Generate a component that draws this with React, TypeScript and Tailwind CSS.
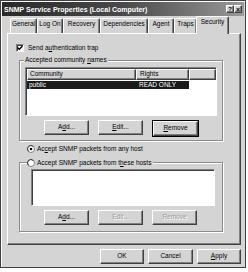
import React from 'react';

const raised =
  'border border-t-white border-l-white border-r-[#404040] border-b-[#404040] shadow-[inset_-1px_-1px_0_#808080]';
const sunken =
  'border border-t-[#808080] border-l-[#808080] border-r-white border-b-white shadow-[inset_1px_1px_0_#404040]';
const etched = 'border border-[#8c8c8c] shadow-[inset_1px_1px_0_#fff,1px_1px_0_#fff]';

type BtnProps = {
  children: React.ReactNode;
  disabled?: boolean;
  isDefault?: boolean;
  w?: string;
};

const Button: React.FC<BtnProps> = ({ children, disabled, isDefault, w = 'w-[45px]' }) => {
  const inner = (
    <div
      className={`${raised} ${w} h-[15px] flex items-center justify-center bg-[#d4d4d4] ${
        disabled ? 'text-[#9a9a9a] [text-shadow:1px_1px_0_#fff]' : 'text-black'
      }`}
    >
      {children}
    </div>
  );
  if (isDefault) {
    return <div className="border border-black">{inner}</div>;
  }
  return inner;
};

const Tab: React.FC<{ label: string; w: string; active?: boolean }> = ({ label, w, active }) => (
  <div
    className={`${w} flex justify-center border-t border-l border-r border-t-white border-l-white border-r-[#404040] rounded-t-[2px] shadow-[inset_-1px_0_0_#808080] bg-[#d4d4d4] ${
      active ? 'h-[18px] relative top-[1px] z-10 pt-[2px] -mx-[1px]' : 'h-[15px] pt-[2px]'
    }`}
  >
    {label}
  </div>
);

export default function App() {
  return (
    <div className="w-[248px] h-[272px] bg-white font-['Liberation_Sans',Arial,sans-serif] text-[6.5px] leading-none text-black">
      <div className="w-[246px] h-[268px] bg-[#d4d4d4] border border-[#404040] shadow-[inset_1px_1px_0_#fff] flex flex-col">
        {/* title bar */}
        <div className="mx-[1px] mt-[1px] h-[14px] flex items-center justify-between pl-[2px] pr-[2px] bg-gradient-to-r from-[#2a2a2a] via-[#4a4a4a] to-[#9a9a9a]">
          <span className="text-white font-bold text-[7px]">SNMP Service Properties (Local Computer)</span>
          <div className="flex">
            <div className={`${raised} w-[8px] h-[8px] flex items-center justify-center font-bold text-[6px] bg-[#d4d4d4]`}>?</div>
            <div className={`${raised} w-[8px] h-[8px] flex items-center justify-center font-bold text-[7px] bg-[#d4d4d4]`}>×</div>
          </div>
        </div>

        {/* tabs */}
        <div className="h-[17px] flex items-end pl-[9px]">
          <Tab label="General" w="w-[27px]" />
          <Tab label="Log On" w="w-[26px]" />
          <Tab label="Recovery" w="w-[37px]" />
          <Tab label="Dependencies" w="w-[48px]" />
          <Tab label="Agent" w="w-[26px]" />
          <Tab label="Traps" w="w-[23px]" />
          <Tab label="Security" w="w-[33px]" active />
        </div>

        {/* panel */}
        <div className="ml-[6px] w-[234px] h-[212px] border border-t-white border-l-white border-r-[#404040] border-b-[#404040] shadow-[inset_-1px_-1px_0_#808080] flex flex-col">
          <div className="ml-[8px] mt-[10px] flex items-center gap-[4px]">
            <div className={`${sunken} w-[8px] h-[8px] bg-white flex items-center justify-center`}>
              <svg width="6" height="6" viewBox="0 0 6 6">
                <path d="M0.5 2.5 L2.3 4.3 L5.5 1" stroke="#000" strokeWidth="1.3" fill="none" />
              </svg>
            </div>
            <span>
              Send a<span className="underline">u</span>thentication trap
            </span>
          </div>

          {/* group 1 */}
          <div className={`${etched} relative ml-[11px] mt-[8px] w-[204px] h-[81px] flex flex-col`}>
            <span className="absolute -top-[4px] left-[4px] px-[1px] bg-[#d4d4d4]">
              Accepted community <span className="underline">n</span>ames
            </span>
            <div className={`${sunken} ml-[5px] mt-[6px] w-[192px] h-[49px] bg-white flex flex-col`}>
              <div className="flex h-[11px] ml-[1px] mt-[1px]">
                <div className={`${raised} w-[109px] h-[11px] flex items-center pl-[2px] bg-[#d4d4d4]`}>Community</div>
                <div className={`${raised} w-[53px] h-[11px] flex items-center pl-[3px] bg-[#d4d4d4]`}>Rights</div>
                <div className={`${raised} flex-1 h-[11px] bg-[#d4d4d4]`} />
              </div>
              <div className="flex ml-[1px] mt-[1px] h-[8px] text-white">
                <div className="w-[109px] bg-[#1a1a1a] pl-[2px] flex items-center">public</div>
                <div className="w-[53px] bg-[#1a1a1a] pl-[3px] flex items-center">READ ONLY</div>
              </div>
            </div>
            <div className="flex gap-[9px] ml-[24px] mt-[4px]">
              <Button>
                A<span className="underline">d</span>d...
              </Button>
              <Button>
                <span className="underline">E</span>dit...
              </Button>
              <Button isDefault>
                <span className="underline">R</span>emove
              </Button>
            </div>
          </div>

          {/* radios */}
          <div className="ml-[19px] mt-[4px] flex items-center gap-[2px]">
            <Radio checked />
            <span>
              Ac<span className="underline">c</span>ept SNMP packets from any host
            </span>
          </div>

          <div className={`${etched} relative ml-[11px] mt-[9px] w-[204px] h-[70px] flex flex-col`}>
            <div className="absolute -top-[4px] left-[7px] pr-[2px] bg-[#d4d4d4] flex items-center gap-[2px]">
              <Radio />
              <span>
                Accept SNMP packets from t<span className="underline">h</span>ese hosts
              </span>
            </div>
            <div className={`${sunken} ml-[11px] mt-[6px] w-[184px] h-[37px] bg-white`} />
            <div className="flex gap-[9px] ml-[24px] mt-[4px]">
              <Button>
                A<span className="underline">d</span>d...
              </Button>
              <Button disabled>Edit...</Button>
              <Button disabled>Remove</Button>
            </div>
          </div>
        </div>

        {/* bottom buttons */}
        <div className="flex justify-end gap-[4px] pr-[4px] mt-[4px]">
          <Button w="w-[44px]">OK</Button>
          <Button w="w-[45px]">Cancel</Button>
          <Button w="w-[44px]">
            <span className="underline">A</span>pply
          </Button>
        </div>
      </div>
    </div>
  );
}

function Radio({ checked }: { checked?: boolean }) {
  return (
    <svg width="8" height="8" viewBox="0 0 8 8">
      <circle cx="4" cy="4" r="3.5" fill="#fff" stroke="#808080" />
      <path d="M1.5 6.3 A3 3 0 0 1 6.3 1.5" stroke="#404040" fill="none" />
      {checked && <circle cx="4" cy="4" r="1.3" fill="#000" />}
    </svg>
  );
}
